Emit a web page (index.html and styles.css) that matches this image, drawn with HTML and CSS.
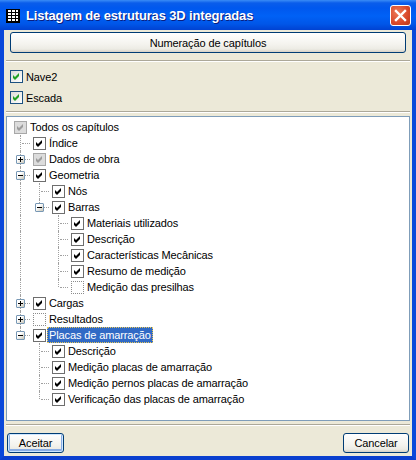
FILE: index.html
```html
<!DOCTYPE html>
<html lang="pt">
  <head>
    <meta charset="UTF-8" />
    <title>Listagem de estruturas 3D integradas</title>
    <link rel="stylesheet" href="styles.css">
  </head>
  <body>
    <svg class="defs" width="0" height="0">
      <symbol id="tick" viewBox="0 0 11 11">
        <polygon points="2,4 4,6 8,2 8,5 4,9 2,7" />
      </symbol>
    </svg>

    <div class="window">
      <div class="titlebar">
        <svg class="app-icon" width="16" height="16" viewBox="0 0 16 16">
          <rect x="1" y="1" width="14" height="14" fill="#000" />
          <rect x="3" y="2" width="10" height="2" fill="#fff" />
          <rect x="3" y="5" width="10" height="2" fill="#fff" />
          <rect x="3" y="8" width="10" height="2" fill="#fff" />
          <rect x="3" y="11" width="10" height="2" fill="#fff" />
          <rect x="6" y="2" width="1" height="12" fill="#000" />
          <rect x="10" y="2" width="1" height="12" fill="#000" />
        </svg>
        <span class="title">Listagem de estruturas 3D integradas</span>
        <span class="close">
          <svg width="13" height="13" viewBox="0 0 13 13">
            <path d="M2 2 L11 11 M11 2 L2 11" stroke="#fff" stroke-width="2.4" stroke-linecap="square" />
          </svg>
        </span>
      </div>

      <div class="client">
        <button class="btn btn-wide">Numeração de capítulos</button>
        <hr class="sep">

        <div class="opts">
          <div class="opt"><span class="xpcheck"><svg><use href="#tick" /></svg></span>Nave2</div>
          <div class="opt"><span class="xpcheck"><svg><use href="#tick" /></svg></span>Escada</div>
        </div>
        <hr class="sep">

        <div class="tree">
          <div class="row"><span class="chk gray"><svg><use href="#tick" /></svg></span><span class="label">Todos os capítulos</span></div>
          <div class="row"><span class="cell tee"></span><span class="chk"><svg><use href="#tick" /></svg></span><span class="label">Índice</span></div>
          <div class="row"><span class="cell tee"><span class="exp plus"></span></span><span class="chk gray"><svg><use href="#tick" /></svg></span><span class="label">Dados de obra</span></div>
          <div class="row"><span class="cell tee"><span class="exp"></span></span><span class="chk"><svg><use href="#tick" /></svg></span><span class="label">Geometria</span></div>
          <div class="row"><span class="cell v"></span><span class="cell tee"></span><span class="chk"><svg><use href="#tick" /></svg></span><span class="label">Nós</span></div>
          <div class="row"><span class="cell v"></span><span class="cell end"><span class="exp"></span></span><span class="chk"><svg><use href="#tick" /></svg></span><span class="label">Barras</span></div>
          <div class="row"><span class="cell v"></span><span class="cell"></span><span class="cell tee"></span><span class="chk"><svg><use href="#tick" /></svg></span><span class="label">Materiais utilizados</span></div>
          <div class="row"><span class="cell v"></span><span class="cell"></span><span class="cell tee"></span><span class="chk"><svg><use href="#tick" /></svg></span><span class="label">Descrição</span></div>
          <div class="row"><span class="cell v"></span><span class="cell"></span><span class="cell tee"></span><span class="chk"><svg><use href="#tick" /></svg></span><span class="label">Características Mecânicas</span></div>
          <div class="row"><span class="cell v"></span><span class="cell"></span><span class="cell tee"></span><span class="chk"><svg><use href="#tick" /></svg></span><span class="label">Resumo de medição</span></div>
          <div class="row"><span class="cell v"></span><span class="cell"></span><span class="cell end"></span><span class="chk empty"></span><span class="label">Medição das presilhas</span></div>
          <div class="row"><span class="cell tee"><span class="exp plus"></span></span><span class="chk"><svg><use href="#tick" /></svg></span><span class="label">Cargas</span></div>
          <div class="row"><span class="cell tee"><span class="exp plus"></span></span><span class="chk empty"></span><span class="label">Resultados</span></div>
          <div class="row"><span class="cell end"><span class="exp"></span></span><span class="chk"><svg><use href="#tick" /></svg></span><span class="label selected">Placas de amarração</span></div>
          <div class="row"><span class="cell"></span><span class="cell tee"></span><span class="chk"><svg><use href="#tick" /></svg></span><span class="label">Descrição</span></div>
          <div class="row"><span class="cell"></span><span class="cell tee"></span><span class="chk"><svg><use href="#tick" /></svg></span><span class="label">Medição placas de amarração</span></div>
          <div class="row"><span class="cell"></span><span class="cell tee"></span><span class="chk"><svg><use href="#tick" /></svg></span><span class="label">Medição pernos placas de amarração</span></div>
          <div class="row"><span class="cell"></span><span class="cell end"></span><span class="chk"><svg><use href="#tick" /></svg></span><span class="label">Verificação das placas de amarração</span></div>
        </div>
        <hr class="sep">

        <div class="actions">
          <button class="btn btn-default" id="acceptButton">Aceitar</button>
          <button class="btn" id="cancelButton">Cancelar</button>
        </div>
      </div>
    </div>
  </body>
</html>
```

FILE: styles.css
```css
body {
  margin: 0;
  font-family: "Liberation Sans", Arial, sans-serif;
  font-size: 11px;
  letter-spacing: -0.12px;
  color: #000;
}
.defs {
  position: absolute;
  width: 0;
  height: 0;
}
.window {
  width: 416px;
  height: 460px;
  box-sizing: border-box;
  border: 4px solid #0B4AD9;
  border-top: 0;
  border-left-color: #0A48DA;
  border-right-color: #0A48DA;
  border-bottom-color: #0A3FCF;
  display: flex;
  flex-direction: column;
}
.titlebar {
  height: 30px;
  margin: 0 -4px;
  display: flex;
  align-items: center;
  background: linear-gradient(#3A8CF6 0, #0A5DEB 3px, #0058EE 8px, #0061F6 16px, #0056E8 24px, #0042D2 30px);
}
.app-icon {
  margin-left: 5px;
  margin-top: 1px;
}
.title {
  margin-left: 5px;
  color: #fff;
  font-weight: bold;
  font-size: 13px;
  letter-spacing: -0.15px;
  text-shadow: 1px 1px 0 #0A1E80;
  flex: 1;
}
.close {
  width: 21px;
  height: 21px;
  box-sizing: border-box;
  margin-right: 5px;
  margin-top: 1px;
  border: 1px solid #fff;
  border-radius: 3px;
  background: radial-gradient(circle at 35% 35%, #EE7B58, #D8482A 60%, #B93A1A);
  display: flex;
  align-items: center;
  justify-content: center;
}
.client {
  flex: 1;
  background: #ECE9D8;
  display: flex;
  flex-direction: column;
}
.btn {
  font-family: "Liberation Sans", Arial, sans-serif;
  font-size: 11px;
  letter-spacing: -0.12px;
  color: #000;
  height: 20px;
  padding: 0;
  border: 1px solid #003C74;
  border-radius: 3px;
  background: linear-gradient(#FFFFFF, #F4F3EE 60%, #ECEBE4 85%, #D6D0C5);
}
.btn-wide {
  margin: 2px 6px 0;
  height: 21px;
}
.btn-default {
  box-shadow: inset 0 0 0 1px #CEE7FF, inset 0 -1px 0 2px #89ADE4;
}
.sep {
  margin: 7px 2px 0;
  height: 0;
  border: 0;
  border-top: 1px solid #ACA899;
  border-bottom: 1px solid #fff;
}
.opts {
  margin-top: 4px;
}
.opt {
  height: 21px;
  display: flex;
  align-items: center;
  margin-left: 6px;
}
.xpcheck {
  width: 13px;
  height: 13px;
  box-sizing: border-box;
  border: 1px solid #1C5180;
  background: linear-gradient(135deg, #DCDCD7, #fff);
  margin-right: 3px;
  fill: #21A121;
}
.xpcheck svg,
.chk svg {
  display: block;
  width: 11px;
  height: 11px;
}
.opts + .sep {
  margin-top: 3px;
}
.tree {
  margin: 3px 2px 0;
  height: 305px;
  box-sizing: border-box;
  border: 1px solid #7F9DB9;
  background: #fff;
  padding: 2px 0 0 4px;
}
.tree + .sep {
  margin-top: 3px;
}
.row {
  height: 16px;
  display: flex;
  align-items: flex-start;
}
.cell {
  width: 19px;
  height: 16px;
  flex: none;
  position: relative;
}
.cell.v::before,
.cell.tee::before,
.cell.end::before {
  content: "";
  position: absolute;
  left: 9px;
  top: 0;
  bottom: 0;
  border-left: 1px dotted #A0A0A0;
}
.cell.end::before {
  bottom: auto;
  height: 8px;
}
.cell.tee::after,
.cell.end::after {
  content: "";
  position: absolute;
  left: 11px;
  right: 0;
  top: 8px;
  border-top: 1px dotted #A0A0A0;
}
.exp {
  position: absolute;
  left: 5px;
  top: 4px;
  width: 9px;
  height: 9px;
  box-sizing: border-box;
  border: 1px solid #7898B5;
  border-radius: 1px;
  background: linear-gradient(135deg, #fff 35%, #C6C3B4);
  z-index: 1;
}
.exp::before,
.exp.plus::after {
  content: "";
  position: absolute;
  background: #000;
}
.exp::before {
  left: 1px;
  top: 3px;
  width: 5px;
  height: 1px;
}
.exp.plus::after {
  left: 3px;
  top: 1px;
  width: 1px;
  height: 5px;
}
.chk {
  width: 13px;
  height: 13px;
  box-sizing: border-box;
  flex: none;
  margin: 2px 0 0 3px;
  border: 1px solid #6E6E6E;
  background: #fff;
  fill: #000;
}
.chk.gray {
  border-color: #A8A8A8;
  background: #DCDCDC;
  fill: #9C9C9C;
}
.chk.empty {
  border: 1px dotted #8C8C8C;
}
.label {
  margin-left: 1px;
  padding: 0 2px;
  line-height: 16px;
  white-space: nowrap;
}
.label.selected {
  background: #316AC5;
  color: #fff;
  outline: 1px dotted #E8C85A;
  outline-offset: -1px;
}
.actions {
  margin: 7px 3px 0;
  display: flex;
  justify-content: space-between;
}
#acceptButton {
  width: 57px;
}
#cancelButton {
  width: 66px;
}
```
